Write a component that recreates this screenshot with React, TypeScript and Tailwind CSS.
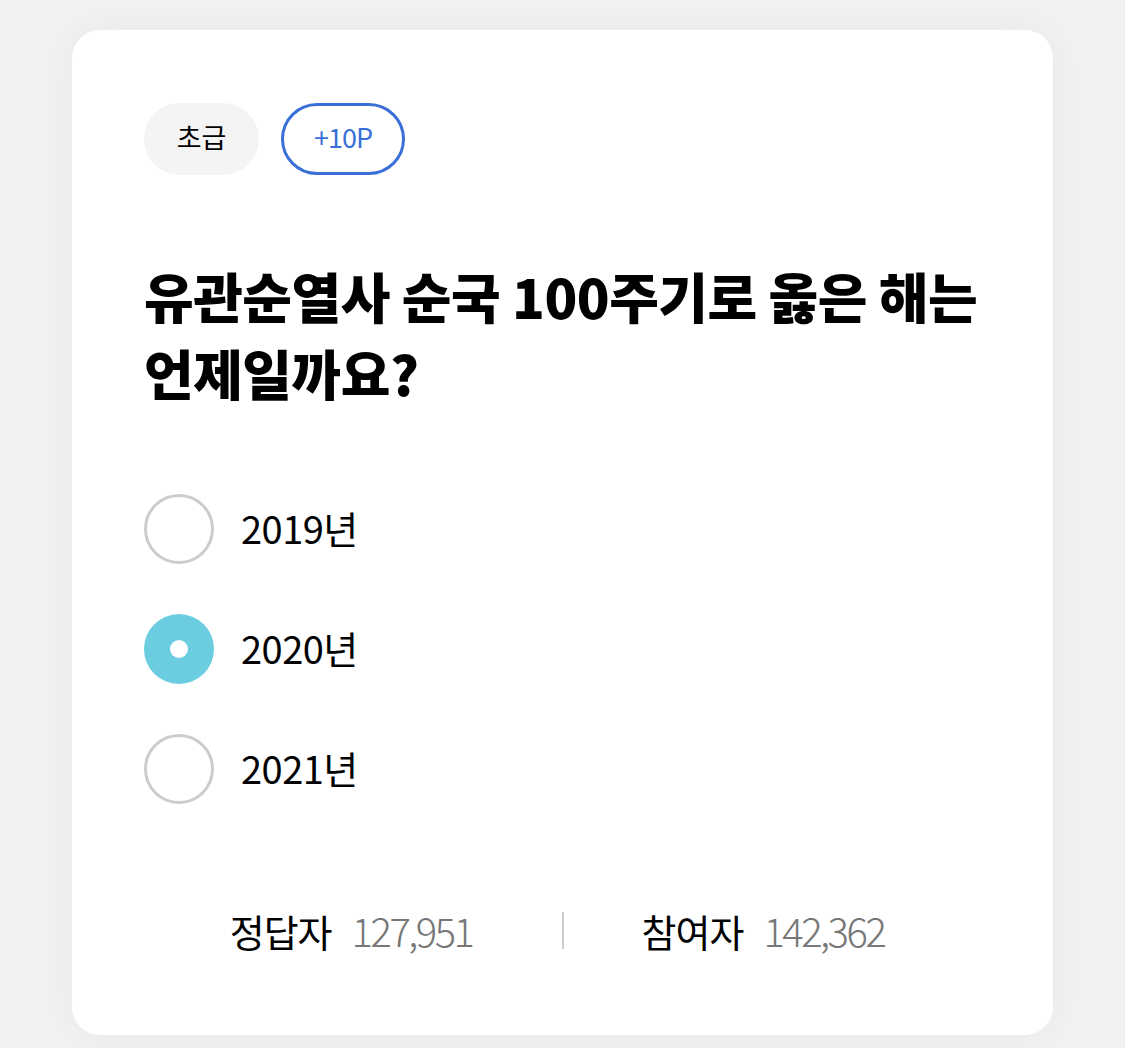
import { useState } from 'react';

const options = ['2019년', '2020년', '2021년'];

export default function App() {
  const [selected, setSelected] = useState(1);

  return (
    <div
      className="min-h-[1048px] bg-[#f2f2f2] px-[72px] pt-[30px]"
      style={{ fontFamily: '"Noto Sans CJK KR", "Noto Sans", sans-serif' }}
    >
      <div className="h-[1005px] rounded-[28px] bg-white px-[72px] pt-[73px] shadow-[0_0_40px_rgba(0,0,0,0.05)]">
        {/* Badges */}
        <div className="flex items-center gap-[22px]">
          <span className="flex h-[72px] w-[115px] items-center justify-center rounded-full bg-[#f4f4f4] pb-[3px] text-[27px] text-black">
            초급
          </span>
          <span className="flex h-[72px] w-[124px] items-center justify-center rounded-full border-[3px] border-[#3a6fd8] pb-[3px] text-[27px] tracking-[-1px] text-[#3a6fd8]">
            +10P
          </span>
        </div>

        {/* Question */}
        <h2 className="mt-[82px] text-[54px] font-black leading-[77px] tracking-[-0.5px] text-black">
          유관순열사 순국 100주기로 옳은 해는
          <br />
          언제일까요?
        </h2>

        {/* Options */}
        <div className="mt-[83px] flex flex-col gap-[50px]">
          {options.map((opt, i) => (
            <button
              key={opt}
              onClick={() => setSelected(i)}
              className="flex items-center gap-[27px] text-left"
            >
              {selected === i ? (
                <span className="flex h-[70px] w-[70px] items-center justify-center rounded-full bg-[#6ccde0]">
                  <span className="h-[18px] w-[18px] rounded-full bg-white" />
                </span>
              ) : (
                <span className="h-[70px] w-[70px] rounded-full border-[3px] border-[#cccccc]" />
              )}
              <span className="pb-[4px] text-[38px] tracking-[-0.5px] text-black">{opt}</span>
            </button>
          ))}
        </div>

        {/* Footer stats */}
        <div className="mt-[96px] flex items-center justify-center">
          <div className="flex w-[340px] items-baseline justify-end gap-[20px] pr-[89px]">
            <span className="whitespace-nowrap text-[38px] tracking-[-1px] text-black">정답자</span>
            <span className="text-[40px] font-light tracking-[-2.5px] text-[#777777]">127,951</span>
          </div>
          <span className="h-[37px] w-[2px] bg-[#cccccc]" />
          <div className="flex w-[340px] items-baseline gap-[20px] pl-[78px]">
            <span className="whitespace-nowrap text-[38px] tracking-[-1px] text-black">참여자</span>
            <span className="text-[40px] font-light tracking-[-2.5px] text-[#777777]">142,362</span>
          </div>
        </div>
      </div>
    </div>
  );
}
